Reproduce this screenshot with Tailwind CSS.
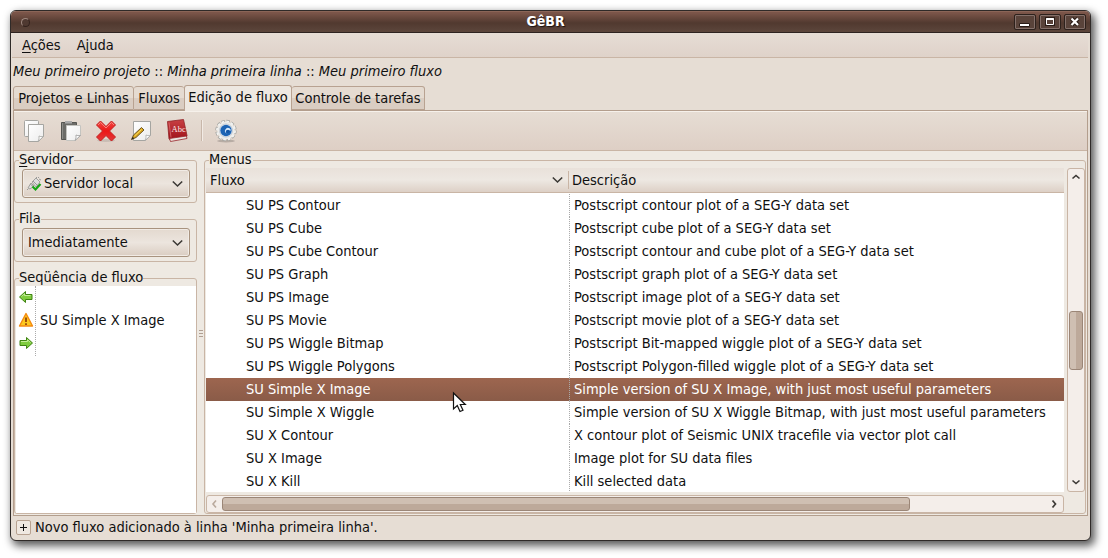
<!DOCTYPE html>
<html lang="pt-BR">
<head>
<meta charset="utf-8">
<title>GêBR</title>
<script src="https://cdn.jsdelivr.net/npm/@tailwindcss/browser@4"></script>
</head>
<body class="bg-white w-[1108px] h-[558px] overflow-hidden pl-[10px] pt-[10px] font-['DejaVu_Sans_Condensed','DejaVu_Sans',sans-serif] [font-stretch:75%] text-[14.5px] leading-[23px] text-[#101010] whitespace-nowrap cursor-default">
<div class="w-[1081px] h-[531px] border border-[#2f2a28] rounded-[6px] bg-[#e6ddd4] overflow-hidden flex flex-col shadow-[3px_4px_9px_1px_rgba(0,0,0,0.65)]">
  <!-- title bar -->
  <div class="h-[22px] shrink-0 flex items-center bg-linear-to-b from-[#7b5549] from-5% via-[#51392f] via-55% to-[#5c463c] border-b border-[#2e2320] border-t border-t-[#8b6557]">
    <div class="w-[76px] pl-[10px]"><div class="size-[9px] rounded-full border border-[#33221d] border-t-[#a08980] border-l-[#a08980] bg-[#4f3931]"></div></div>
    <div class="flex-1 text-center text-white font-bold text-[14px] leading-[19px] -mt-px pr-[10px] [text-shadow:1px_1px_1px_#1c1210]">GêBR</div>
    <div class="flex gap-[3px] pr-[4px] [&>div]:w-[22px] [&>div]:h-[16px] [&>div]:rounded-[2px] [&>div]:border [&>div]:border-[#2d211c] [&>div]:bg-[#59433a] [&>div]:shadow-[inset_0_0_0_1px_#84706a]">
      <div><svg width="20" height="14"><path d="M4.500 8.500h10v3h-10z" fill="#fff" stroke="#2a1c17"/></svg></div>
      <div><svg width="20" height="14"><path d="M7 4h6v5H7z" fill="none" stroke="#2a1c17" stroke-width="4"/><path d="M6.500 3.500h7v6h-7z" fill="#59433a" stroke="#fff"/><path d="M6 4.200h8" stroke="#fff" stroke-width="1.600"/></svg></div>
      <div><svg width="20" height="14"><path d="M6.500 3.500l6.500 6.500m0-6.500l-6.500 6.500" stroke="#2a1c17" stroke-width="4.500"/><path d="M6.500 3.500l6.500 6.500m0-6.500l-6.500 6.500" stroke="#fff" stroke-width="2.200"/></svg></div>
    </div>
  </div>
  <!-- menu bar -->
  <div class="h-[25px] shrink-0 mr-[2px] ml-px border-b border-[#c9b5a5] bg-linear-to-b from-[#e6ddd5] to-[#dfd2c9] flex items-center pl-[10px] gap-[16px]">
    <span><u class="underline-offset-2">A</u>ções</span><span>A<u class="underline-offset-2 [text-decoration-skip-ink:none]">j</u>uda</span>
  </div>
  <div class="h-[27px] shrink-0 pl-[2px] leading-[27px]"><i>Meu primeiro projeto</i> :: <i>Minha primeira linha</i> :: <i>Meu primeiro fluxo</i></div>
  <!-- tabs -->
  <div class="h-[25px] shrink-0 ml-[2px] flex items-end relative z-10 [&>div]:border [&>div]:border-[#b8a291] [&>div]:rounded-t-[3px] [&>div]:flex [&>div]:justify-center">
    <div class="w-[121px] h-[24px] bg-linear-to-b from-[#e5dbd1] from-50% to-[#dacdc2] to-50% leading-[22px]">Projetos e Linhas</div>
    <div class="w-[50px] h-[24px] bg-linear-to-b from-[#e5dbd1] from-50% to-[#dacdc2] to-50% border-l-0! border-r-0! leading-[22px]">Fluxos</div>
    <div class="w-[108px] h-[26px] border-b-0! bg-[#eee8e1] leading-[23px] -mb-px">Edição de fluxo</div>
    <div class="w-[133px] h-[24px] bg-linear-to-b from-[#e5dbd1] from-50% to-[#dacdc2] to-50% border-l-0! leading-[22px]">Controle de tarefas</div>
  </div>
  <!-- notebook page -->
  <div class="h-[406px] shrink-0 ml-[2px] mr-[2px] border border-[#b39e8d] border-t-[#b39e8d] bg-[#eee9e2] flex flex-col">
    <div class="h-[40px] shrink-0 border-t border-t-[#f6f1eb] border-b border-b-[#c9b5a5] bg-linear-to-b from-[#e6ddd4] to-[#decfc5] flex items-center pl-[8px]">
      <svg width="218" height="30" viewBox="22 116 218 30">
        <defs>
          <linearGradient id="pg" x1="0" y1="0" x2="1" y2="1"><stop offset="0" stop-color="#fff"/><stop offset="1" stop-color="#ececec"/></linearGradient>
          <linearGradient id="rd" x1="0" y1="0" x2="0" y2="1"><stop offset="0" stop-color="#c84144"/><stop offset="1" stop-color="#9f1018"/></linearGradient>
          <linearGradient id="rx" x1="0" y1="0" x2="0" y2="1"><stop offset="0" stop-color="#f04b45"/><stop offset=".5" stop-color="#ec1717"/><stop offset="1" stop-color="#e23a3a"/></linearGradient>
        </defs>
        <!-- copy -->
        <rect x="24.500" y="120.500" width="14" height="16" rx="1" fill="url(#pg)" stroke="#a5a5a1"/>
        <path d="M28.500 124.500h15v12l-5 5h-10z" fill="url(#pg)" stroke="#a5a5a1"/><path d="M43.500 136.500q-3 .5-4.500-.5q.5 3-1 5.500z" fill="#fff" stroke="#a5a5a1" stroke-width=".8"/>
        <!-- paste -->
        <path d="M61.500 122.500h15v17h-15z" fill="#6c6c68" stroke="#555551"/><path d="M62.500 123v16" stroke="#8c8c88"/><rect x="65" y="121" width="7" height="2.500" fill="#aaa"/>
        <path d="M66.500 125.500h14v10l-5 5h-9z" fill="url(#pg)" stroke="#c4c4c0"/><path d="M80.500 135.500q-3 .5-4.500-.5q.5 3-1 5.500z" fill="#fff" stroke="#999" stroke-width=".8"/>
        <!-- delete -->
        <ellipse cx="106" cy="140.500" rx="9" ry="1.500" fill="#000" opacity=".1"/>
        <path d="M96.500 125l4-4 5.500 5.500 5.500-5.500 4 4-6 6 6 6-4 4-5.500-5.500-5.500 5.500-4-4 6-6z" fill="url(#rx)" stroke="#c42020"/>
        <path d="M98 125l2.500-2.500 5.500 5.500 5.500-5.500 2.500 2.500" fill="none" stroke="#ff9189" stroke-width=".8"/>
        <!-- edit -->
        <path d="M133.500 121.500h17v14l-5 5h-12z" fill="url(#pg)" stroke="#a5a5a1"/><path d="M150.500 135.500q-3 .5-4.500-.5q.5 3-1 5.500z" fill="#fff" stroke="#aaa" stroke-width=".8"/>
        <path d="M131.500 139.500l2-4.500 8-7.500 2.500 2.500-8 7.500z" fill="#dba61c" stroke="#5e4a1e" stroke-width=".9"/><path d="M131.500 139.500l1.200-2.600 1.600 1.400z" fill="#222"/><path d="M134.500 136l7-6.500" stroke="#f8dc65"/>
        <!-- dictionary -->
        <path d="M167.500 121.500l16-2 3.500 16-1 2-15 2.500-2-1z" fill="url(#rd)" stroke="#8f2226" stroke-width=".8"/>
        <path d="M169.500 138.500l17-2.500.5 2.500-16.500 3z" fill="#e9e4df" stroke="#982329" stroke-width=".8"/><path d="M169 122.500l2 15" stroke="#dc6c6e" stroke-width=".8"/>
        <text x="171.500" y="132" font-family="Liberation Serif" font-size="8.500" fill="#fbeaea">Abc</text>
        <path d="M201.500 120v21" stroke="#c8b7aa"/><path d="M202.500 120v21" stroke="#f2ebe5"/>
        <!-- execute gear -->
        <ellipse cx="226" cy="141" rx="9" ry="1.500" fill="#000" opacity=".18"/>
        <circle cx="226" cy="130.500" r="9.200" fill="none" stroke="#a2a29e" stroke-width="3" stroke-dasharray="3.300 1.517"/>
        <circle cx="226" cy="130.500" r="8.800" fill="#ececea"/>
        <circle cx="226" cy="130.500" r="9.100" fill="none" stroke="#f3f3f1" stroke-width="1.800" stroke-dasharray="2.700 2.065"/>
        <circle cx="226" cy="130.500" r="6.500" fill="#f8fbff" stroke="#b4bcc6" stroke-width=".8"/>
        <circle cx="226" cy="130.500" r="5.700" fill="#1d64b4"/>
        <path d="M226.500 133.500a3 3 0 0 1 3-5.200a5.200 5.200 0 0 1 1.500 2.200h-2.500a1.500 1.500 0 0 0-2 3z" fill="#d6e9fb"/><circle cx="228" cy="131.500" r="1.700" fill="#1557a5"/>
      </svg>
    </div>
    <div class="flex-1 flex pt-px">
      <!-- left column -->
      <div class="w-[183px] shrink-0 flex flex-col gap-[7px]">
        <fieldset class="h-[51px] mb-px border border-[#c9b5a5] rounded-[3px] pl-[7px]">
          <legend class="h-[17px] leading-[15px] -ml-[3px]"><u class="underline-offset-2">S</u>ervidor</legend>
          <div class="w-[168px] h-[29px] border border-[#a8937f] rounded-[3px] bg-linear-to-b from-[#e3d9cf] via-[#ece5de] via-50% to-[#dacdc2] shadow-[inset_0_0_0_1px_#f1ebe5] flex items-center pl-[4px]">
            <svg width="15" height="16" viewBox="0 0 15 16"><path d="M1 12l3-5 3 3-4 3zM5 6l4-4 4 4-4 5z" fill="#ddd" stroke="#a0a09c"/><path d="M9 1l1 1m1-1l1 1m0 1l2 1M3 8l4 3M1 13l-1 1M6 5l5 5" stroke="#999"/><path d="M5.500 10.500l3 3 5-5.500" fill="none" stroke="#16a516" stroke-width="2.200"/></svg>
            <span class="ml-[2px]">Servidor local</span>
            <svg class="ml-auto mr-[6px]" width="11" height="8"><path d="M.8 1.500l4.700 4.500 4.700-4.500" fill="none" stroke="#3c3935" stroke-width="1.600"/></svg>
          </div>
        </fieldset>
        <fieldset class="h-[51px] mb-px border border-[#c9b5a5] rounded-[3px] pl-[7px]">
          <legend class="h-[17px] leading-[15px] -ml-[3px]">Fila</legend>
          <div class="w-[168px] h-[29px] border border-[#a8937f] rounded-[3px] bg-linear-to-b from-[#e3d9cf] via-[#ece5de] via-50% to-[#dacdc2] shadow-[inset_0_0_0_1px_#f1ebe5] flex items-center pl-[5px]">
            <span>Imediatamente</span>
            <svg class="ml-auto mr-[6px]" width="11" height="8"><path d="M.8 1.500l4.700 4.500 4.700-4.500" fill="none" stroke="#3c3935" stroke-width="1.600"/></svg>
          </div>
        </fieldset>
        <fieldset class="h-[244px] border border-[#c9b5a5] rounded-[3px] pl-px">
          <legend class="h-[17px] leading-[15px] ml-[3px]">Seqüência de fluxo</legend>
          <div class="h-[227px] -mt-px bg-white">
            <div class="h-[70px] flex">
              <div class="w-[20px] h-[70px] border-r border-dotted border-[#aaa] flex flex-col items-center [&>svg]:mt-[3px] [&>svg]:mb-[4px] [&>svg]:shrink-0">
                <svg width="16" height="16" viewBox="0 0 16 16"><path d="M1.500 8l6-5.500V5.500h6.500v5h-6.500v3z" fill="#7fcc3e" stroke="#3f8312" stroke-linejoin="round"/><path d="M3.500 7.500l3-2.700v1.700h6" fill="none" stroke="#c4ee98"/></svg>
                <svg width="16" height="16" viewBox="0 0 16 16"><path d="M8 1.500l6.500 12.500h-13z" fill="#fcc81d" stroke="#f58a10" stroke-width="1.400" stroke-linejoin="round"/><path d="M8 5.500v4.500M8 11.200v1.800" stroke="#8f3b08" stroke-width="1.700"/></svg>
                <svg width="16" height="16" viewBox="0 0 16 16"><path d="M14.500 8l-6-5.500V5.500H2v5h6.500v3z" fill="#7fcc3e" stroke="#3f8312" stroke-linejoin="round"/><path d="M3 6.500h6.500v-1.700l3 2.700" fill="none" stroke="#c4ee98"/></svg>
              </div>
              <span class="pl-[4px] pt-[23px]">SU Simple X Image</span>
            </div>
          </div>
        </fieldset>
      </div>
      <!-- pane handle -->
      <div class="w-[7px] shrink-0 flex flex-col items-end gap-[2px] pt-[178px] pr-[1px] [&>div]:w-[4px] [&>div]:h-px [&>div]:bg-[#b09f92]"><div></div><div></div><div></div></div>
      <!-- menus -->
      <fieldset class="w-[882px] h-[362px] border border-[#c9b5a5] rounded-[3px] pl-px">
        <legend class="h-[17px] leading-[15px] ml-[3px] pr-px">Menus</legend>
        <div class="flex -mt-px">
          <div class="w-[858px] shrink-0">
            <div class="h-[25px] border-b border-[#c9b5a5] bg-linear-to-b from-[#e9e1da] via-[#ede8e2] via-50% to-[#ddd0c6] flex items-center">
              <div class="w-[363px] h-[18px] border-r border-[#c9b5a5] flex items-center justify-between pl-[4px] pr-[5px]"><span>Fluxo</span><svg width="11" height="8"><path d="M.8 1.500l4.700 4.500 4.700-4.500" fill="none" stroke="#3c3935" stroke-width="1.600"/></svg></div>
              <div class="pl-[3px]">Descrição</div>
            </div>
            <div id="rows" class="h-[299px] bg-white pt-px overflow-hidden"></div>
            <div class="h-[18px] mt-[3px] border border-[#c9b5a5] rounded-[3px] bg-[#f4eeea] flex items-center">
              <svg class="w-[15px] shrink-0" height="10"><path d="M9 1.500L6 5l3 3.500" fill="none" stroke="#b9a99c" stroke-width="1.600"/></svg>
              <div class="w-[688px] h-[14px] border border-[#9b8677] rounded-[3px] bg-linear-to-b from-[#cfbfb2] from-50% to-[#bda99a] to-50%"></div>
              <svg class="ml-auto mr-[4px]" width="10" height="10"><path d="M3.500 1.500L6.500 5l-3 3.500" fill="none" stroke="#3c3935" stroke-width="1.700"/></svg>
            </div>
          </div>
          <div class="ml-[3px] w-[18px] h-[324px] border border-[#c9b5a5] rounded-[3px] bg-[#f4eeea] flex flex-col items-center">
            <svg class="mt-[3px] shrink-0" width="10" height="9"><path d="M1.500 6.500L5 3.500l3.500 3" fill="none" stroke="#3c3935" stroke-width="1.600"/></svg>
            <div class="mt-[130px] w-[14px] h-[59px] border border-[#9b8677] rounded-[3px] bg-linear-to-r from-[#cfbfb2] from-50% to-[#bda99a] to-50% shrink-0"></div>
            <svg class="mt-auto mb-[4px] shrink-0" width="10" height="9"><path d="M1.500 2.500L5 5.500l3.500-3" fill="none" stroke="#3c3935" stroke-width="1.600"/></svg>
          </div>
        </div>
      </fieldset>
    </div>
  </div>
  <!-- status bar -->
  <div class="flex-1 flex items-center pl-[5px] pb-[2px]">
    <div class="size-[15px] border border-[#b8a291] rounded-[2px] bg-[#efe8e1] flex items-center justify-center"><svg width="9" height="9"><path d="M1 4.500h7M4.500 1v7" stroke="#111"/></svg></div>
    <span class="ml-[4px]">Novo fluxo adicionado à linha 'Minha primeira linha'.</span>
  </div>
</div>
<!-- pointer -->
<svg class="absolute left-[452px] top-[391px]" width="16" height="24" viewBox="0 0 16 24"><path d="M1.500 2v16l3.800-3.500 2.700 6 3-1.300-2.700-5.700h5z" fill="#fff" stroke="#111" stroke-width="1.200"/></svg>
<script>
const data = [
["SU PS Contour","Postscript contour plot of a SEG-Y data set"],
["SU PS Cube","Postscript cube plot of a SEG-Y data set"],
["SU PS Cube Contour","Postscript contour and cube plot of a SEG-Y data set"],
["SU PS Graph","Postscript graph plot of a SEG-Y data set"],
["SU PS Image","Postscript image plot of a SEG-Y data set"],
["SU PS Movie","Postscript movie plot of a SEG-Y data set"],
["SU PS Wiggle Bitmap","Postscript Bit-mapped wiggle plot of a SEG-Y data set"],
["SU PS Wiggle Polygons","Postscript Polygon-filled wiggle plot of a SEG-Y data set"],
["SU Simple X Image","Simple version of SU X Image, with just most useful parameters"],
["SU Simple X Wiggle","Simple version of SU X Wiggle Bitmap, with just most useful parameters"],
["SU X Contour","X contour plot of Seismic UNIX tracefile via vector plot call"],
["SU X Image","Image plot for SU data files"],
["SU X Kill","Kill selected data"]];
document.getElementById("rows").innerHTML = data.map(([a, b], i) =>
  `<div class="h-[23px] flex ${i === 8 ? "bg-linear-to-b from-[#9d664f] to-[#8a5b48] text-white" : ""}"><div class="w-[364px] pl-[40px] border-r border-dotted border-[#aaa]">${a}</div><div class="pl-[4px]">${b}</div></div>`).join("");
</script>
</body>
</html>
